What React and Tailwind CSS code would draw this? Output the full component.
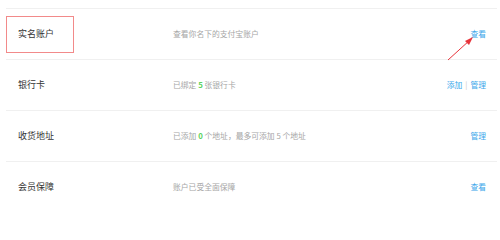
const rows = [
  {
    label: '实名账户',
    desc: ['查看你名下的支付宝账户'],
    links: ['查看'],
    marked: true,
  },
  {
    label: '银行卡',
    desc: ['已绑定 ', '5', ' 张银行卡'],
    links: ['添加', '管理'],
  },
  {
    label: '收货地址',
    desc: ['已添加 ', '0', ' 个地址，最多可添加 5 个地址'],
    links: ['管理'],
  },
  {
    label: '会员保障',
    desc: ['账户已受全面保障'],
    links: ['查看'],
  },
]

function Row({ row }) {
  return (
    <div className="flex h-[51px] items-center border-t border-[#f0f0f0]">
      <div className="w-[167px] shrink-0">
        <div
          className={`flex h-[37px] w-[68px] items-center pl-[11px] text-[9px] text-[#333333] ${
            row.marked ? 'border-[1.5px] border-[#f28a8a]' : 'border-[1.5px] border-transparent'
          }`}
        >
          {row.label}
        </div>
      </div>
      <div className="flex-1 text-[7.8px] text-[#a6a6a6]">
        {row.desc.map((part, i) =>
          i === 1 ? (
            <span key={i} className="font-bold text-[#5cd35c]">
              {part}
            </span>
          ) : (
            <span key={i}>{part}</span>
          ),
        )}
      </div>
      <div className="flex items-center pr-[11px] text-[7.8px] text-[#3ba7ea]">
        {row.links.map((link, i) => (
          <span key={link} className="flex items-center">
            {i > 0 && <span className="mx-[3px] text-[#c8c8c8]">|</span>}
            {link}
          </span>
        ))}
      </div>
    </div>
  )
}

export default function App() {
  return (
    <div
      className="relative h-[212px] w-[500px] overflow-hidden bg-white pl-[6px] pr-[3px] pt-[8px]"
      style={{ fontFamily: '"Noto Sans CJK SC", "Noto Sans", sans-serif' }}
    >
      {rows.map((row) => (
        <Row key={row.label} row={row} />
      ))}
      <svg className="absolute left-[444px] top-[33px]" width="34" height="32" viewBox="0 0 34 32">
        <line x1="4" y1="27" x2="26" y2="7" stroke="#e8333a" strokeWidth="1" />
        <polygon points="29,4 21,8 25,12" fill="#e8333a" />
      </svg>
    </div>
  )
}
